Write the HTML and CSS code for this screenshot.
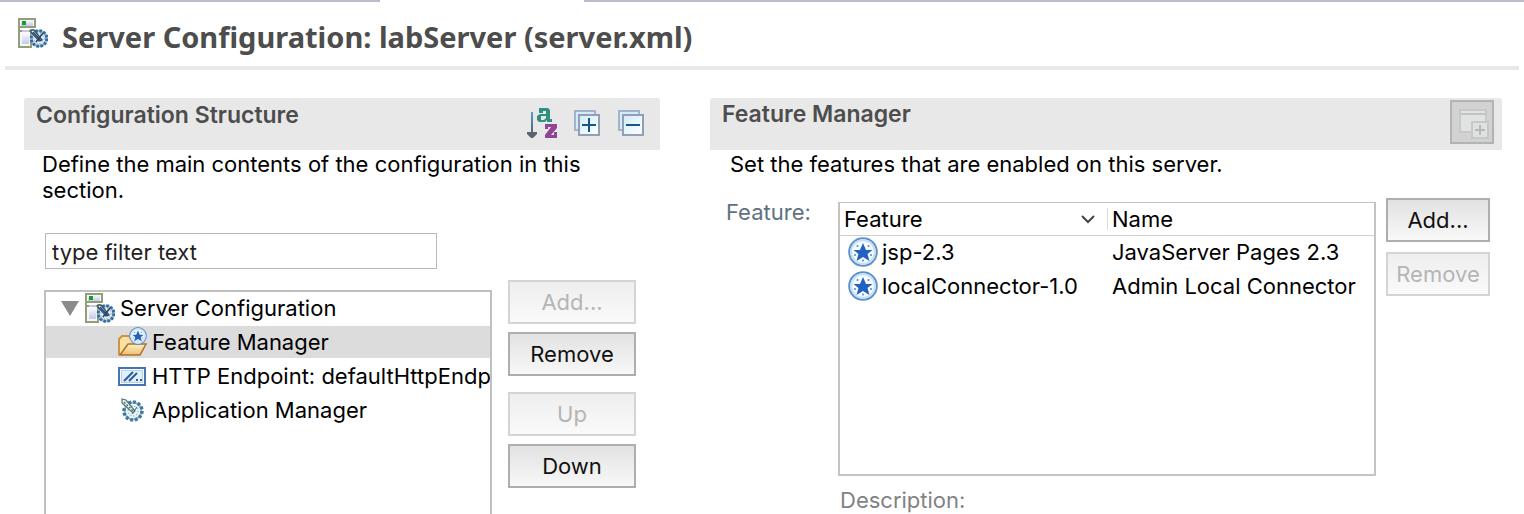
FILE: index.html
```html
<!DOCTYPE html>
<html lang="en">
<head>
<meta charset="utf-8">
<title>Server Configuration: labServer (server.xml)</title>
<link rel="stylesheet" href="styles.css">
</head>
<body>
<svg class="defs" aria-hidden="true">
  <defs>
    <linearGradient id="lilac" x1="0" y1="0" x2="0" y2="1"><stop offset="0" stop-color="#f1f1fa"/><stop offset="1" stop-color="#c3cae8"/></linearGradient>
    <linearGradient id="pane" x1="0" y1="0" x2="1" y2="1"><stop offset="0" stop-color="#d3ecf9"/><stop offset="1" stop-color="#ffffff"/></linearGradient>
    <linearGradient id="folder" x1="0" y1="0" x2="0" y2="1"><stop offset="0" stop-color="#ffefc2"/><stop offset="1" stop-color="#efbd72"/></linearGradient>
    <linearGradient id="arrow" x1="0" y1="0" x2="0" y2="1"><stop offset="0" stop-color="#5d9acb"/><stop offset="1" stop-color="#59636d"/></linearGradient>
    <symbol id="gear" viewBox="0 0 24 24">
      <circle cx="13" cy="13" r="8.500" fill="#f2f8fa" stroke="#8db6cc" stroke-width="2"/>
      <circle cx="13" cy="13" r="9" fill="none" stroke="#3f78a0" stroke-width="3.500" stroke-dasharray="2.700 2"/>
      <circle cx="13" cy="13" r="5" fill="none" stroke="#9fc3b8" stroke-width="1.400" stroke-dasharray="1.500 1.500"/>
      <path d="M2 1l4 1 9 11-2 2L2 5z" fill="#f6f7e4" stroke="#4a7377" stroke-width="1.200"/>
      <path d="M4 4l9 9" stroke="#446a73" stroke-width="1.400" stroke-dasharray="2 1.500"/>
      <path d="M12 16l5-7" stroke="#4c7793" stroke-width="1.200"/>
    </symbol>
    <symbol id="server" viewBox="0 0 30 30">
      <path d="M1 1h16v8H1zM1 9v20h12V13H1" fill="#f7f8fb" stroke="#949e78" stroke-width="2"/>
      <path d="M3 3h12v5H3z" fill="url(#lilac)"/>
      <path d="M4 3h4v4H4z" fill="#169d2b"/>
      <path d="M4 12h7v2H4z" fill="#c3cbe0"/>
      <path d="M4 17h7v9H4z" fill="url(#lilac)"/>
      <circle cx="21" cy="20.500" r="7.500" fill="#e6f1f8" stroke="#9dbbd5" stroke-width="2.500"/>
      <circle cx="21" cy="20.500" r="7.800" fill="none" stroke="#356b98" stroke-width="3" stroke-dasharray="2.500 1.600"/>
      <circle cx="21" cy="20.500" r="5" fill="none" stroke="#8da9bf" stroke-width="1" stroke-dasharray="1.500 1.500"/>
      <path d="M13 12l3 0 8 10-3 1-8-9z" fill="#eef2ea" stroke="#2e4f70" stroke-width="1.300"/>
      <path d="M15 14l8 9M18 24l7-9" stroke="#27456a" stroke-width="1.600"/>
    </symbol>
    <symbol id="star" viewBox="0 0 30 30">
      <circle cx="15" cy="15" r="13.800" fill="#f5fbff" stroke="#5c91ce" stroke-width="2"/>
      <circle cx="15" cy="15" r="11.800" fill="none" stroke="#c5e0f4" stroke-width="2"/>
      <path d="M15 6l3 7h6.500l-5 4 2 7-6.500-4-6.500 4 2-7-5-4H12z" fill="#2360c4"/>
      <g fill="#4b85d1"><circle cx="9.500" cy="9" r="1"/><circle cx="20.500" cy="9" r="1"/><circle cx="7" cy="18" r="1"/><circle cx="23" cy="18" r="1"/><circle cx="15" cy="23.500" r="1"/></g>
    </symbol>
  </defs>
</svg>

<div class="tabs"><span class="tab-edge"></span><span class="tab-edge"></span></div>

<header class="page-head">
  <svg class="icon"><use href="#server"/></svg>
  <h1>Server Configuration: labServer (server.xml)</h1>
</header>

<main class="panels">
  <section class="panel">
    <div class="panel-head">
      <h2>Configuration Structure</h2>
      <div class="tools">
        <button class="tool" aria-label="Sort alphabetically">
          <svg class="sort" viewBox="0 0 30 32">
            <path d="M4 5h2v21H4z" fill="url(#arrow)"/>
            <path d="M0 25h10v2l-4 4H4l-4-4z" fill="#59636d"/>
            <path d="M12 1h9l2 2v9h2v3h-5v-2l-2 2h-6l-2-2V9l3-2h6V4h-3v2h-4zM14 9v4h3l2-2V9z" fill="#2f9080" fill-rule="evenodd"/>
            <path d="M18 17h12v4l-6 7h3v-3h3v6H18v-3l6-8h-3v2h-3z" fill="#914494"/>
          </svg>
        </button>
        <button class="tool" aria-label="Expand all">
          <svg class="stack" viewBox="0 0 28 28">
            <path d="M2 2h20v19H2z" fill="#d3ecf9" stroke="#a0b5c9" stroke-width="2"/><path d="M6 6h20v20H6z" fill="url(#pane)" stroke="#929fb7" stroke-width="2"/>
            <path d="M9 16h14M16 9v14" stroke="#165789" stroke-width="2"/>
          </svg>
        </button>
        <button class="tool" aria-label="Collapse all">
          <svg class="stack" viewBox="0 0 28 28">
            <path d="M2 2h20v19H2z" fill="#d3ecf9" stroke="#a0b5c9" stroke-width="2"/><path d="M6 6h20v20H6z" fill="url(#pane)" stroke="#929fb7" stroke-width="2"/>
            <path d="M9 16h14" stroke="#165789" stroke-width="2"/>
          </svg>
        </button>
      </div>
    </div>
    <p class="intro">Define the main contents of the configuration in this section.</p>
    <input class="filter" type="text" value="type filter text" aria-label="Filter">
    <div class="structure">
      <ul class="tree">
        <li class="node root">
          <svg class="twisty" viewBox="0 0 18 15"><path d="M0 0h18L9 15z" fill="#8b8b8b"/></svg>
          <svg class="icon"><use href="#server"/></svg><span>Server Configuration</span>
        </li>
        <li class="node selected">
          <svg class="icon" viewBox="0 0 30 30">
            <path d="M2 27V12l3-3h7l2 3h9v15z" fill="#fbe0a4" stroke="#ce9345" stroke-width="2"/>
            <path d="M3 28l8-11h18l-6 11z" fill="url(#folder)" stroke="#aa722c" stroke-width="1.500"/>
            <use href="#star" x="12" y="0" width="18" height="18"/>
          </svg><span>Feature Manager</span>
        </li>
        <li class="node">
          <svg class="icon" viewBox="0 0 30 30">
            <path d="M2 7h26v17H2z" fill="#f6fbff" stroke="#4774ac" stroke-width="2"/><path d="M4.500 9.500h21v12h-21z" fill="#e2effb" stroke="#b4d1ea"/>
            <path d="M7 20l9-9M12 20l8-8M19 19h2M23 19h2" stroke="#2c5d96" stroke-width="2"/>
          </svg><span>HTTP Endpoint: defaultHttpEndpoint</span>
        </li>
        <li class="node">
          <svg class="icon" viewBox="0 0 30 30"><use href="#gear" x="3" y="3" width="24" height="24"/></svg><span>Application Manager</span>
        </li>
      </ul>
      <div class="actions">
        <div class="pair"><button class="btn" disabled>Add...</button><button class="btn">Remove</button></div>
        <div class="pair"><button class="btn" disabled>Up</button><button class="btn">Down</button></div>
      </div>
    </div>
  </section>

  <section class="panel">
    <div class="panel-head detail-head">
      <h2>Feature Manager</h2>
      <button class="new" disabled aria-label="New">
        <svg viewBox="0 0 40 40">
          <path d="M8 8h26v22H8z" fill="#e1e3e3" stroke="#c7c8c9" stroke-width="2"/><path d="M9 12h24" stroke="#c0c2ca" stroke-width="2"/>
          <path d="M20 20h16v16H20z" fill="#dfe0e0" stroke="#c6c7c7" stroke-width="2"/><path d="M23 28h10M28 23v10" stroke="#b6b9bb" stroke-width="2"/>
        </svg>
      </button>
    </div>
    <p class="intro detail-intro">Set the features that are enabled on this server.</p>
    <div class="features">
      <span class="label" id="feature-label">Feature:</span>
      <div class="grid-box">
        <table class="grid" aria-labelledby="feature-label">
          <thead>
            <tr>
              <th><div class="th">Feature <svg class="chevron" viewBox="0 0 16 10"><path d="M2 2l6 6 6-6" fill="none" stroke="#444" stroke-width="2"/></svg></div></th>
              <th><div class="th second">Name</div></th>
            </tr>
          </thead>
          <tbody>
            <tr><td><div class="cell"><svg class="icon"><use href="#star"/></svg>jsp-2.3</div></td><td class="name">JavaServer Pages 2.3</td></tr>
            <tr><td><div class="cell"><svg class="icon"><use href="#star"/></svg>localConnector-1.0</div></td><td class="name">Admin Local Connector</td></tr>
          </tbody>
        </table>
      </div>
      <div class="side"><button class="btn">Add...</button><button class="btn" disabled>Remove</button></div>
      <span class="description">Description:</span>
    </div>
  </section>
</main>
</body>
</html>
```
FILE: styles.css
```css
* { box-sizing: border-box; }
body {
  margin: 0;
  height: 100vh;
  overflow: hidden;
  display: flex;
  flex-direction: column;
  background: #fff;
  color: #000;
  font: 22px/26px Inter, "Liberation Sans", sans-serif;
}
h1, h2, p, ul { margin: 0; padding: 0; }
button, input { font: inherit; color: inherit; }
.defs { position: absolute; width: 0; height: 0; }
.icon { width: 30px; height: 30px; flex: none; }

.tabs { display: grid; grid-template-columns: 380fr 940fr; column-gap: 204px; flex: none; }
.tab-edge { height: 2px; background: #b8bccd; }

.page-head {
  display: flex;
  align-items: flex-start;
  gap: 14px;
  flex: none;
  height: 68px;
  margin: 0 5px;
  padding: 16px 13px 0;
  border-bottom: 4px solid #e8e8e8;
}
h1 { font: bold 29px/38px "Noto Sans", "Open Sans", sans-serif; color: #4d4d4d; }

.panels {
  flex: 1;
  display: grid;
  grid-template-columns: minmax(0, 636fr) minmax(0, 792fr);
  gap: 50px;
  padding: 28px 22px 0 24px;
}
.panel-head {
  display: flex;
  justify-content: space-between;
  height: 52px;
  padding: 3px 15px 0 12px;
  background: #e8e8e8;
  border-radius: 3px 3px 0 0;
}
.detail-head { padding: 2px 8px 0 12px; }
h2 { font-size: 23px; line-height: 28px; font-weight: 600; color: #4d4d4d; }
.tools { display: flex; gap: 16px; padding-top: 6px; }
.tool { display: flex; padding: 0; border: 0; background: none; }
.sort { width: 30px; height: 32px; }
.stack { width: 28px; height: 28px; margin-top: 2px; }
.new { width: 44px; height: 44px; padding: 0; border: 2px solid #b3b3b3; background: #d2d2d2; }
.new svg { display: block; }

.intro { padding: 1px 18px 0; }
.detail-intro { padding-left: 20px; }
.filter {
  display: block;
  width: 392px;
  height: 36px;
  margin: 30px 0 0 21px;
  padding: 1px 6px 0;
  border: 1px solid #b9b9b9;
  color: #222;
  outline: 0;
}
.structure { display: flex; gap: 16px; padding: 11px 24px 0 20px; }
.tree {
  flex: 1;
  min-width: 0;
  height: 240px;
  margin-top: 10px;
  display: flex;
  flex-direction: column;
  gap: 2px;
  overflow: hidden;
  border: 2px solid #c0c0c0;
  list-style: none;
  white-space: nowrap;
}
.node { display: flex; align-items: center; gap: 5px; flex: none; height: 32px; padding-left: 71px; }
.root { padding-left: 15px; }
.selected { background: #dcdcdc; }
.twisty { width: 18px; height: 15px; flex: none; }
.root .twisty { margin-right: 1px; }

.btn {
  width: 100%;
  height: 44px;
  padding: 0;
  border: 2px solid #aeaeae;
  background: linear-gradient(#e2e2e2, #f8f8f8);
  color: #111;
}
.btn:disabled { border-color: #d4d4d4; background: linear-gradient(#eeeeee, #fafafa); color: #b5b5b5; }
.actions { width: 128px; display: flex; flex-direction: column; gap: 16px; }
.pair { display: flex; flex-direction: column; gap: 8px; }

.features {
  display: grid;
  grid-template-columns: 112px minmax(0, 1fr) 104px;
  padding: 21px 12px 0 16px;
}
.label { padding-top: 1px; color: #5f7182; }
.grid-box { height: 274px; margin-top: 4px; margin-right: 10px; border: 2px solid #c4c4c4; border-top-width: 1px; }
.grid { width: 100%; border-collapse: collapse; table-layout: fixed; }
.grid th { height: 32px; padding: 0; border-bottom: 1px solid #d0d0d0; font-weight: 400; text-align: left; }
.th { display: flex; justify-content: space-between; align-items: center; padding: 0 11px 0 4px; }
.second { height: 22px; border-left: 1px solid #dcdcdc; }
.chevron { width: 16px; height: 10px; }
.grid td { height: 34px; padding: 0; white-space: nowrap; }
.cell { display: flex; align-items: center; gap: 4px; height: 30px; padding-left: 8px; }
.grid td.name { padding-left: 5px; }
.side { display: flex; flex-direction: column; gap: 10px; }
.description { grid-column: 2; padding: 11px 2px 0; color: #828282; }
```
